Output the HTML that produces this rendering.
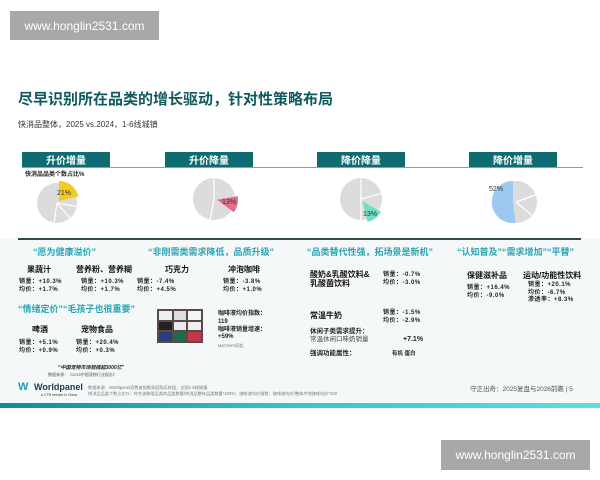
<!DOCTYPE html>
<html><head><meta charset="utf-8"><style>
*{margin:0;padding:0;box-sizing:border-box}
body{width:600px;height:480px;background:#fff;position:relative;overflow:hidden;font-family:"Liberation Sans","Noto Sans CJK SC",sans-serif;color:#222}
.a{position:absolute;white-space:nowrap;line-height:1}
.wm{position:absolute;background:#a8a8a8;color:#fff;font-size:12px;display:flex;align-items:center;justify-content:center}
.hd{position:absolute;top:152px;height:15px;width:88px;background:#0f6b72;color:#fff;font-size:10px;font-weight:bold;display:flex;align-items:center;justify-content:center}
.q{color:#2aa5b5;font-size:9px;font-weight:bold}
.n{font-size:8px;font-weight:bold;color:#111}
.v{font-size:6px;font-weight:bold;color:#222;line-height:7.5px;letter-spacing:.5px}
</style></head><body>
<div class="wm" style="left:10px;top:11px;width:149px;height:29px">www.honglin2531.com</div>
<div class="a" style="left:18px;top:92px;font-size:15px;font-weight:bold;color:#0f5a5e">尽早识别所在品类的增长驱动，针对性策略布局</div>
<div class="a" style="left:18px;top:121px;font-size:8px;color:#333">快消品整体，2025 vs.2024，1-6线城镇</div>

<div class="hd" style="left:22px">升价增量</div>
<div class="hd" style="left:165px">升价降量</div>
<div class="hd" style="left:317px">降价降量</div>
<div class="hd" style="left:469px">降价增量</div>
<div style="position:absolute;left:22px;top:167px;width:561px;height:1px;background:#999"></div>
<div class="a" style="left:25px;top:172px;font-size:6px;font-weight:bold">快消品品类个数占比%</div>

<svg style="position:absolute;left:0;top:0" width="600" height="240">
<g stroke="#fff" stroke-width="1.2">
<circle cx="57" cy="203" r="20" fill="#dcdcdc" stroke="none"/>
<line x1="57" y1="203" x2="76.7" y2="206.5"/><line x1="57" y1="203" x2="70" y2="218"/><line x1="57" y1="203" x2="54" y2="223"/>
<path d="M59,201 L59,181 A20,20 0 0 1 78.4,196.2 Z" fill="#f2cb1f" stroke="none"/>
<circle cx="214" cy="199" r="21" fill="#dcdcdc" stroke="none"/>
<line x1="214" y1="199" x2="214" y2="178"/><line x1="214" y1="199" x2="210" y2="220"/>
<path d="M217,199.7 L237.7,196.1 A21,21 0 0 1 233.8,212.3 Z" fill="#e56b8c" stroke="none"/>
<circle cx="361" cy="199" r="21" fill="#dcdcdc" stroke="none"/>
<line x1="361" y1="199" x2="361" y2="178"/><line x1="361" y1="199" x2="381.3" y2="193.6"/><line x1="361" y1="199" x2="361" y2="220"/>
<path d="M362.8,201.4 L381,211.9 A21,21 0 0 1 367.5,221.9 Z" fill="#6fe0c3" stroke="none"/>
<circle cx="516" cy="202" r="21" fill="#dcdcdc" stroke="none"/>
<line x1="516" y1="202" x2="535.7" y2="194.8"/><line x1="516" y1="202" x2="532" y2="215.5"/>
<path d="M513,202 L515.6,222.8 A21,21 0 1 1 513,181 Z" fill="#9cc8f2" stroke="none"/>
</g>
<g font-family="Liberation Sans" font-size="7" fill="#333">
<text x="57" y="195">21%</text><text x="222" y="204">13%</text><text x="363" y="216">13%</text><text x="489" y="191">52%</text>
</g>
</svg>

<div style="position:absolute;left:0;top:239px;width:600px;height:164px;background:#f5f8f9"></div>
<div style="position:absolute;left:18px;top:238px;width:563px;height:2px;background:#2d4a4c"></div>
<div style="position:absolute;left:0;top:403px;width:600px;height:5px;background:linear-gradient(90deg,#168897,#3cc3cc,#5fdde2)"></div>

<div class="a q" style="left:33px;top:248px">“愿为健康溢价”</div>
<div class="a q" style="left:148px;top:248px">“非刚需类需求降低，品质升级”</div>
<div class="a q" style="left:307px;top:248px">“品类替代性强，拓场景是新机”</div>
<div class="a q" style="left:457px;top:248px">“认知普及”“需求增加”“平替”</div>

<div class="a n" style="left:27px;top:266px">果蔬汁</div>
<div class="a n" style="left:76px;top:266px">营养粉、营养糊</div>
<div class="a v" style="left:19px;top:279px">销量：+10.3%<br>均价：+1.7%</div>
<div class="a v" style="left:81px;top:279px">销量：+10.3%<br>均价：+1.7%</div>
<div class="a q" style="left:18px;top:305px">“情绪定价”“毛孩子也很重要”</div>
<div class="a n" style="left:32px;top:326px">啤酒</div>
<div class="a n" style="left:81px;top:326px">宠物食品</div>
<div class="a v" style="left:19px;top:340px">销量：+5.1%<br>均价：+0.9%</div>
<div class="a v" style="left:76px;top:340px">销量：+20.4%<br>均价：+0.3%</div>
<div class="a" style="left:58px;top:366px;font-size:5px;font-weight:bold;font-style:italic">“中国宠物市场规模超3000亿”</div>
<div class="a" style="left:48px;top:373px;font-size:4px;color:#555">数据来源：《2025中国宠物行业报告》</div>

<div class="a n" style="left:165px;top:266px">巧克力</div>
<div class="a n" style="left:228px;top:266px">冲泡咖啡</div>
<div class="a v" style="left:137px;top:279px">销量：-7.4%<br>均价：+4.5%</div>
<div class="a v" style="left:223px;top:279px">销量：-3.8%<br>均价：+1.0%</div>
<div style="position:absolute;left:157px;top:309px;width:46px;height:34px;background:#5a4a45;display:grid;grid-template-columns:1fr 1fr 1fr;gap:2px;padding:2px">
<div style="background:#eee"></div><div style="background:#ddd"></div><div style="background:#f4f4f4"></div>
<div style="background:#222"></div><div style="background:#e8e8f0"></div><div style="background:#eee"></div>
<div style="background:#2a3d7a"></div><div style="background:#1f6b4a"></div><div style="background:#c2384a"></div></div>
<div class="a" style="left:218px;top:311px;font-size:6px;font-weight:bold;line-height:7.8px">咖啡液均价指数：<br>119<br>咖啡液销量增速：<br>+59%</div>
<div class="a" style="left:218px;top:344px;font-size:4px;color:#666">MAT25P3同比</div>

<div class="a n" style="left:310px;top:270px;line-height:9px">酸奶&amp;乳酸饮料&amp;<br>乳酸菌饮料</div>
<div class="a v" style="left:383px;top:272px">销量：-0.7%<br>均价：-3.0%</div>
<div class="a n" style="left:310px;top:312px">常温牛奶</div>
<div class="a v" style="left:383px;top:310px">销量：-1.5%<br>均价：-2.9%</div>
<div class="a" style="left:310px;top:329px;font-size:6.5px;font-weight:bold">休闲子类需求提升：</div>
<div class="a" style="left:310px;top:337px;font-size:6.5px;color:#444">常温休闲口味奶销量</div>
<div class="a" style="left:403px;top:336px;font-size:7px;font-weight:bold">+7.1%</div>
<div class="a" style="left:310px;top:351px;font-size:6.5px;font-weight:bold">强调功能属性：</div>
<div class="a" style="left:392px;top:352px;font-size:5.5px;font-weight:bold">有机 蛋白</div>

<div class="a n" style="left:467px;top:272px">保健滋补品</div>
<div class="a n" style="left:523px;top:272px">运动/功能性饮料</div>
<div class="a v" style="left:467px;top:285px">销量：+16.4%<br>均价：-9.0%</div>
<div class="a v" style="left:528px;top:282px">销量：+20.1%<br>均价：-6.7%<br>渗透率：+8.3%</div>

<div class="a" style="left:18px;top:382px;font-size:11px;font-weight:bold;color:#1aa0ae">W</div>
<div class="a" style="left:34px;top:383px;font-size:9px;font-weight:bold;color:#1b3a4a">Worldpanel</div>
<div class="a" style="left:41px;top:394px;font-size:3.5px;color:#333">a CTR service in China</div>
<div class="a" style="left:88px;top:385px;font-size:4.2px;color:#777;line-height:6px">数据来源：Worldpanel消费者指数家庭购买样组，全国1-6线城镇<br>快消品品类个数占比%：符合该象限品类的品类数量/快消品整体品类数量*100%；咖啡液均价指数：咖啡液均价/整体冲泡咖啡均价*100</div>
<div class="a" style="left:470px;top:387px;font-size:6.5px;color:#555">守正出奇：2025复盘与2026前瞻 | 5</div>

<div class="wm" style="left:441px;top:440px;width:149px;height:30px">www.honglin2531.com</div>
</body></html>
